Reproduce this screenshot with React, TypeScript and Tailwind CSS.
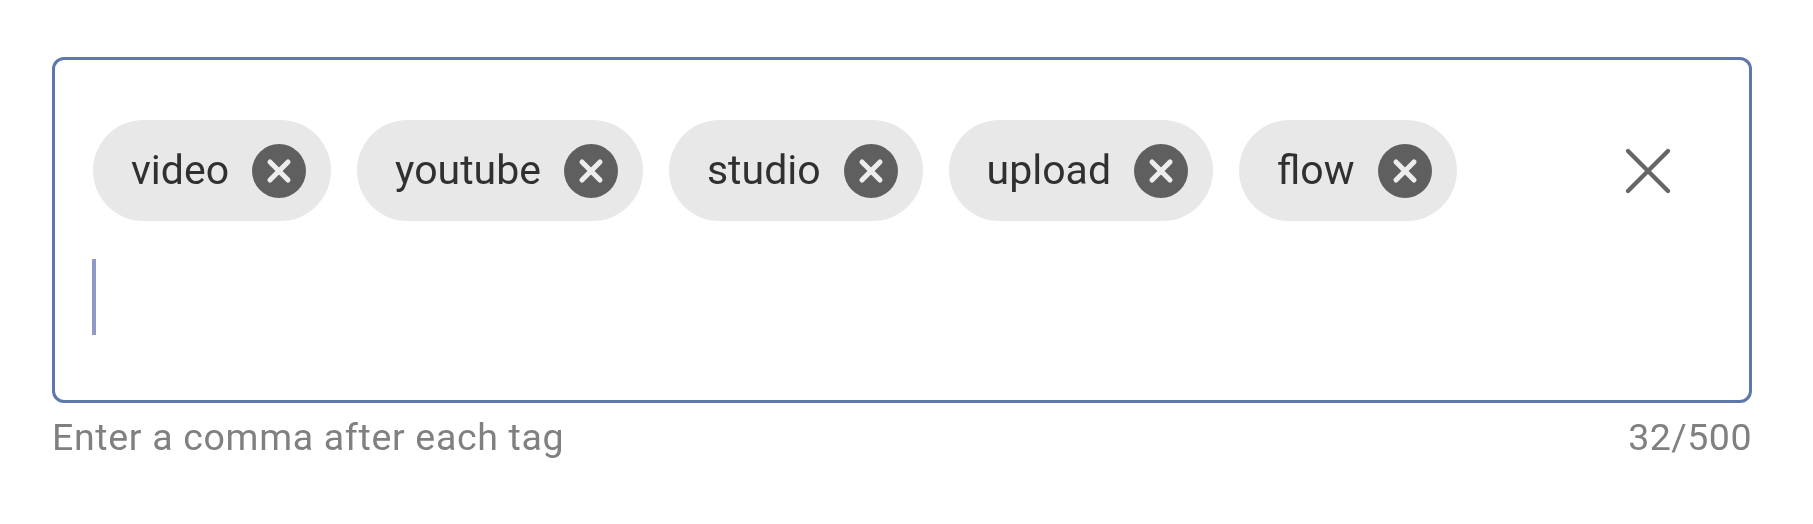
import { X } from "lucide-react";

const TAGS = ["video", "youtube", "studio", "upload", "flow"];

function Tag({ label }: { label: string }) {
  return (
    <div className="flex h-[101px] items-center gap-[23px] rounded-full bg-[#e8e8e8] pl-[38px] pr-[25px]">
      <span className="text-[41px] leading-none text-[#303030]">{label}</span>
      <span className="flex h-[54px] w-[54px] items-center justify-center rounded-full bg-[#5f5f5f]">
        <X size={36} strokeWidth={3.4} className="text-[#ededed]" />
      </span>
    </div>
  );
}

export default function App() {
  return (
    <div className="h-[524px] w-[1813px] bg-white px-[52px] pt-[57px] font-['Roboto',sans-serif] blur-[0.7px]">
      <div className="flex h-[346px] w-[1700px] flex-col rounded-[12px] border-[3px] border-[#5f78ab] pl-[38px] pr-[61px] pt-[60px]">
        <div className="flex items-center justify-between">
          <div className="flex gap-[26px]">
            {TAGS.map((t) => (
              <Tag key={t} label={t} />
            ))}
          </div>
          <X size={80} strokeWidth={1.3} className="text-[#666666]" />
        </div>
        <div className="ml-[-1px] mt-[38px] h-[76px] w-[4px] bg-[#8f98c6]" />
      </div>
      <div className="mt-[12px] flex w-[1700px] items-center justify-between text-[37.5px] leading-[44px] tracking-[0.5px] text-[#808080]">
        <span className="tracking-[0.67px]">Enter a comma after each tag</span>
        <span>32/500</span>
      </div>
    </div>
  );
}
